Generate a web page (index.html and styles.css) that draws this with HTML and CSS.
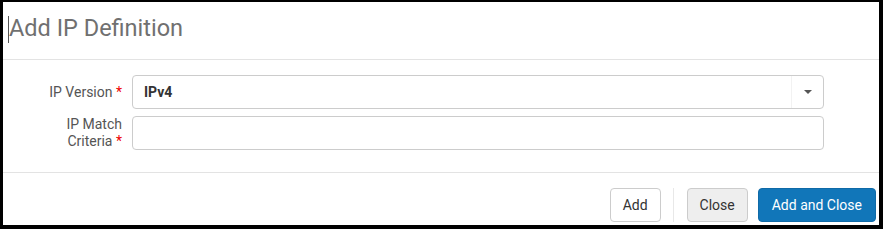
FILE: index.html
```html
<!DOCTYPE html>
<html lang="en">
<head>
    <meta charset="UTF-8">
    <meta name="viewport" content="width=device-width, initial-scale=1.0">
    <title>Add IP Definition</title>
    <link rel="stylesheet" href="styles.css">
</head>
<body>
    <div class="dialog">
        <div class="dialog-header">
            <span class="caret"></span>
            <h1>Add IP Definition</h1>
        </div>

        <form class="dialog-body">
            <div class="form-row">
                <label class="form-label" for="ipVersion">IP Version <span class="req">*</span></label>
                <div class="select-box" id="ipVersion">
                    <span class="select-value">IPv4</span>
                    <span class="select-arrow"></span>
                </div>
            </div>
            <div class="form-row">
                <label class="form-label" for="ipMatch">IP Match Criteria <span class="req">*</span></label>
                <input type="text" id="ipMatch" class="text-input">
            </div>
        </form>

        <div class="dialog-footer">
            <button type="button" class="btn">Add</button>
            <span class="btn-divider"></span>
            <button type="button" class="btn btn-grey">Close</button>
            <button type="button" class="btn btn-primary">Add and Close</button>
        </div>
    </div>
</body>
</html>
```

FILE: styles.css
```css
html, body {
    margin: 0;
    padding: 0;
}
body {
    font-family: Roboto, "Liberation Sans", Arial, sans-serif;
    background-color: #fff;
}
.dialog {
    box-sizing: border-box;
    width: 883px;
    height: 229px;
    border-style: solid;
    border-color: #000;
    border-width: 2px 4px 4px 3px;
    display: flex;
    flex-direction: column;
    background-color: #fff;
}
.dialog-header {
    height: 57px;
    border-bottom: 1px solid #e3e3e3;
    display: flex;
    align-items: center;
    padding-left: 5px;
}
.caret {
    width: 1px;
    height: 27px;
    margin-bottom: 3px;
    background-color: #555;
}
.dialog-header h1 {
    margin: 0 0 6px 0;
    font-size: 23.5px;
    font-weight: 400;
    color: #707070;
}
.dialog-body {
    margin: 0;
    padding: 15px 55px 22px 0;
    display: flex;
    flex-direction: column;
    gap: 7px;
    border-bottom: 1px solid #e3e3e3;
}
.form-row {
    display: grid;
    grid-template-columns: 129px 1fr;
    align-items: center;
}
.form-label {
    padding-left: 40px;
    padding-right: 10px;
    text-align: right;
    font-size: 14px;
    line-height: 17px;
    color: #555;
}
.req {
    color: #e00;
}
.select-box, .text-input {
    box-sizing: border-box;
    height: 34px;
    border: 1px solid #ccc;
    border-radius: 4px;
    background-color: #fff;
}
.select-box {
    display: flex;
    align-items: center;
    padding-left: 11px;
}
.select-value {
    flex: 1;
    font-size: 14px;
    font-weight: bold;
    color: #333;
}
.select-arrow {
    width: 31px;
    height: 100%;
    border-left: 1px solid #f2f2f2;
    display: flex;
    align-items: center;
    justify-content: center;
}
.select-arrow::after {
    content: "";
    border-left: 4px solid transparent;
    border-right: 4px solid transparent;
    border-top: 4px solid #555;
}
.text-input {
    width: 100%;
    font-family: inherit;
    font-size: 14px;
    padding: 0 11px;
}
.dialog-footer {
    flex: 1;
    display: flex;
    align-items: flex-start;
    justify-content: flex-end;
    padding: 15px 3px 0 0;
}
.btn {
    height: 34px;
    padding: 0 12px;
    font-family: inherit;
    font-size: 14px;
    color: #333;
    background-color: #fff;
    border: 1px solid #ccc;
    border-radius: 4px;
    cursor: pointer;
}
.btn-divider {
    width: 1px;
    height: 34px;
    background-color: #e8e8e8;
    margin: 0 13px 0 12px;
}
.btn-grey {
    background-color: #eee;
    margin-right: 10px;
}
.btn-primary {
    padding: 0 13px;
    background-color: #1176b9;
    border-color: #0f6aa7;
    color: #fff;
}
```
